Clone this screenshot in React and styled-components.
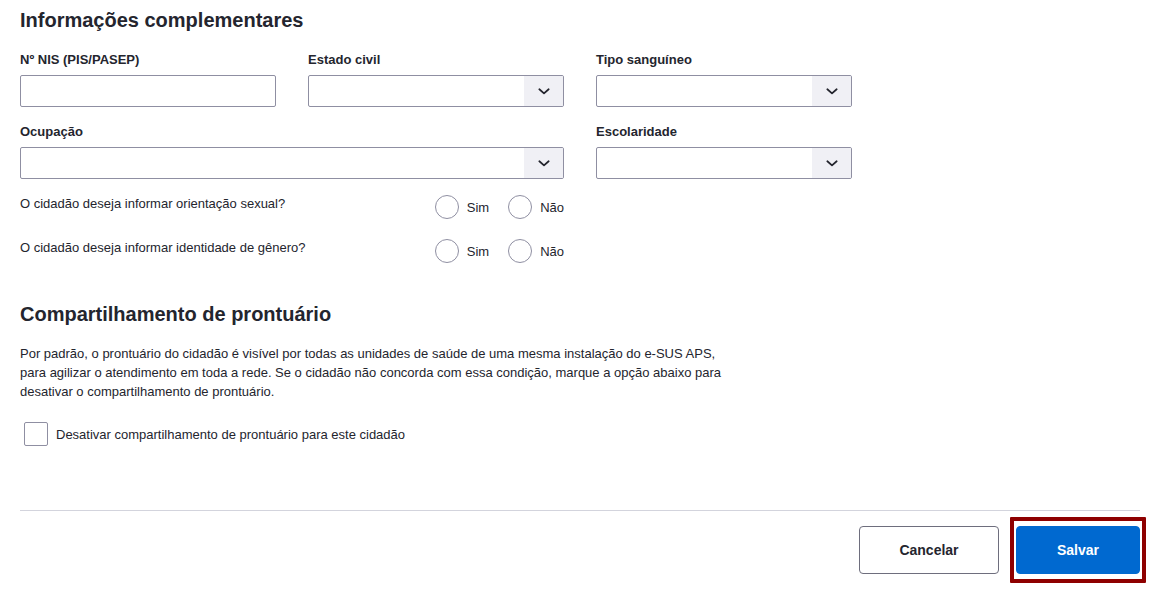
import styled, { createGlobalStyle } from "styled-components";

const GlobalStyle = createGlobalStyle`
  body {
    margin: 0;
    background: #fff;
    font-family: "Liberation Sans", Arial, sans-serif;
    color: #24252e;
  }
`

const Page = styled.div`
  display: flex;
  flex-direction: column;
  padding: 8px 18px 0 20px;
`

const SectionTitle = styled.h2`
  margin: 0;
  font-size: 20px;
  line-height: 24px;
  font-weight: bold;
  color: #24252e;
`

const FormGrid = styled.div`
  display: grid;
  grid-template-columns: repeat(3, 256px);
  column-gap: 32px;
  row-gap: 15px;
  margin-top: 18px;
`

const Field = styled.div`
  display: flex;
  flex-direction: column;
  gap: 5px;
  grid-column: span ${(p) => p.span || 1};
`

const Label = styled.label`
  font-size: 13px;
  line-height: 20px;
  font-weight: bold;
`

const TextInput = styled.input`
  box-sizing: border-box;
  height: 32px;
  width: 100%;
  border: 1px solid #8f8fa2;
  border-radius: 2px;
  outline: none;
  font: inherit;
`

const SelectBox = styled.div`
  box-sizing: border-box;
  display: flex;
  height: 32px;
  border: 1px solid #8f8fa2;
  border-radius: 2px;
  overflow: hidden;
`

const SelectValue = styled.div`
  flex: 1;
`

const SelectArrow = styled.div`
  width: 39px;
  display: flex;
  align-items: center;
  justify-content: center;
  background: #f0f0f5;
`

const QuestionRow = styled.div`
  grid-column: span 2;
  display: flex;
  justify-content: space-between;
  align-items: flex-start;
  margin-top: ${(p) => p.first ? "1px" : "5px"};
`

const Question = styled.span`
  font-size: 13px;
  line-height: 18px;
`

const Options = styled.div`
  display: flex;
  gap: 19px;
`

const Option = styled.label`
  display: flex;
  align-items: center;
  gap: 8px;
  font-size: 13px;
`

const Radio = styled.span`
  box-sizing: border-box;
  width: 24px;
  height: 24px;
  border: 1px solid #8f8fa2;
  border-radius: 50%;
`

const Section = styled.section`
  margin-top: 39px;
  display: flex;
  flex-direction: column;
`

const Paragraph = styled.p`
  margin: 18px 0 0;
  font-size: 13px;
  line-height: 19px;
  max-width: 712px;
`

const CheckRow = styled.label`
  display: flex;
  align-items: center;
  gap: 8px;
  margin: 21px 0 0 4px;
  font-size: 13px;
`

const Checkbox = styled.span`
  box-sizing: border-box;
  width: 24px;
  height: 24px;
  border: 1px solid #8f8fa2;
  border-radius: 2px;
`

const Footer = styled.div`
  margin-top: 64px;
  border-top: 1px solid #d3d4dd;
  padding-top: 6px;
  display: flex;
  justify-content: flex-end;
  align-items: center;
  gap: 11px;
`

const FocusRing = styled.div`
  display: flex;
  padding: 5px 2px;
  border: 4px solid #8e0000;
  border-radius: 1px;
  margin-right: -6px;
`

const Button = styled.button`
  box-sizing: border-box;
  height: 48px;
  width: ${(p) => p.width}px;
  border-radius: 4px;
  font-family: "Liberation Sans", Arial, sans-serif;
  font-size: 14px;
  font-weight: bold;
  cursor: pointer;
  border: 1px solid ${(p) => p.primary ? "#0069d0" : "#6e6e7d"};
  background: ${(p) => p.primary ? "#0069d0" : "#fff"};
  color: ${(p) => p.primary ? "#fff" : "#24252e"};
  outline: none;
`

const Chevron = () => (
  <svg width="14" height="14" viewBox="0 0 24 24" fill="none" stroke="#24252e" strokeWidth="3" strokeLinecap="round" strokeLinejoin="round">
    <path d="M4 9l8 7 8-7" />
  </svg>
)

const Select = () => (
  <SelectBox>
    <SelectValue />
    <SelectArrow><Chevron /></SelectArrow>
  </SelectBox>
)

const YesNo = () => (
  <Options>
    <Option><Radio />Sim</Option>
    <Option><Radio />Não</Option>
  </Options>
)

export default function App() {
  return (
    <Page>
      <GlobalStyle />
      <SectionTitle>Informações complementares</SectionTitle>
      <FormGrid>
        <Field>
          <Label>Nº NIS (PIS/PASEP)</Label>
          <TextInput />
        </Field>
        <Field>
          <Label>Estado civil</Label>
          <Select />
        </Field>
        <Field>
          <Label>Tipo sanguíneo</Label>
          <Select />
        </Field>
        <Field span={2}>
          <Label>Ocupação</Label>
          <Select />
        </Field>
        <Field>
          <Label>Escolaridade</Label>
          <Select />
        </Field>
        <QuestionRow first>
          <Question>O cidadão deseja informar orientação sexual?</Question>
          <YesNo />
        </QuestionRow>
        <QuestionRow>
          <Question>O cidadão deseja informar identidade de gênero?</Question>
          <YesNo />
        </QuestionRow>
      </FormGrid>
      <Section>
        <SectionTitle>Compartilhamento de prontuário</SectionTitle>
        <Paragraph>
          Por padrão, o prontuário do cidadão é visível por todas as unidades de saúde de uma mesma instalação do e-SUS APS, para agilizar o atendimento em toda a rede. Se o cidadão não concorda com essa condição, marque a opção abaixo para desativar o compartilhamento de prontuário.
        </Paragraph>
        <CheckRow>
          <Checkbox />
          Desativar compartilhamento de prontuário para este cidadão
        </CheckRow>
      </Section>
      <Footer>
        <Button width={140}>Cancelar</Button>
        <FocusRing>
          <Button width={124} primary>Salvar</Button>
        </FocusRing>
      </Footer>
    </Page>
  )
}
